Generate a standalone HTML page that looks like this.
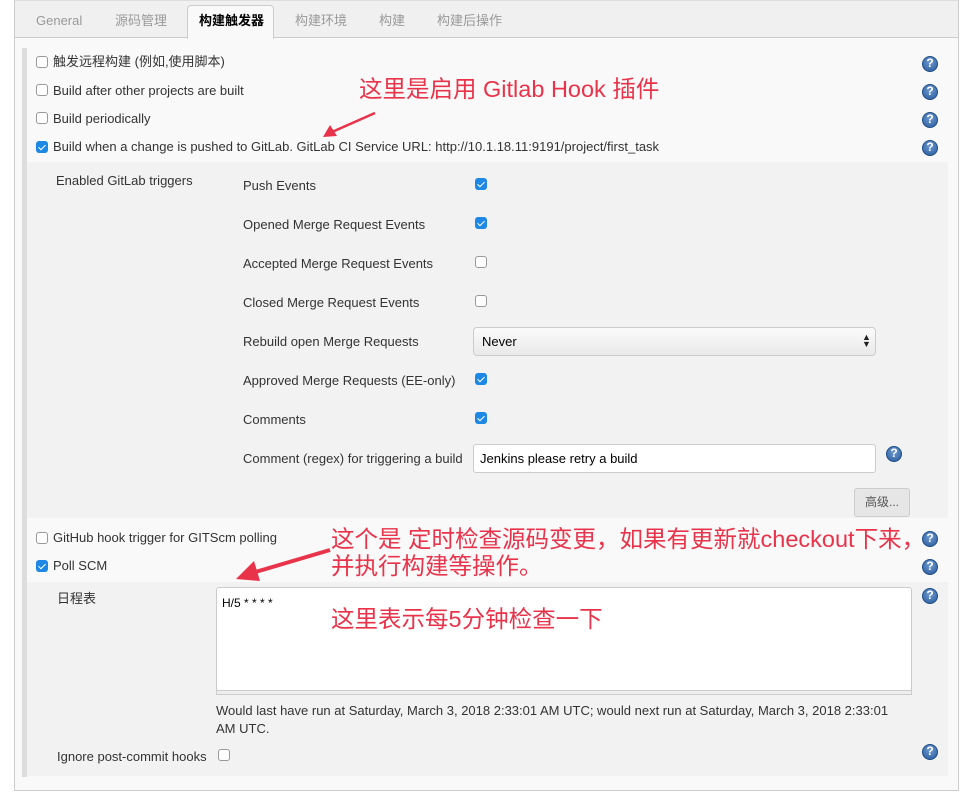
<!DOCTYPE html>
<html><head><meta charset="utf-8"><style>
*{margin:0;padding:0;box-sizing:border-box}
body{width:969px;height:792px;background:#fff;font-family:"Liberation Sans","Noto Sans CJK SC",sans-serif;font-size:13px;color:#333;position:relative;overflow:hidden}
.a{position:absolute;white-space:nowrap;line-height:16px}
.cb{position:absolute;width:12px;height:12px;border:1px solid #999;border-radius:3px;background:#fff}
.cc{position:absolute;width:12px;height:12px;border-radius:3px;background:#1e88e5}
.cc:after{content:"";position:absolute;left:4px;top:1.5px;width:3px;height:6px;border:solid #fff;border-width:0 1.6px 1.6px 0;transform:rotate(45deg)}
.h{position:absolute;width:16px;height:16px;border-radius:50%;background:radial-gradient(circle at 50% 35%,#6d9ad0,#2a5a9c);border:1.5px solid #1f4d87;color:#fff;font:bold 12px/13px "Liberation Sans",sans-serif;text-align:center}
.r{color:#e8334a;font-size:23.5px;line-height:27px;font-family:"Liberation Sans","Noto Sans CJK SC",sans-serif}
</style></head><body>
<div class="a" style="left:14px;top:0;width:945px;height:791px;border:1px solid #ccc;border-top:1px solid #ddd;background:#f9f9f9"></div>
<div class="a" style="left:15px;top:1px;width:943px;height:37px;background:#f0f0f0;border-bottom:1px solid #ccc"></div>
<div class="a" style="left:36px;top:13px;color:#999">General</div>
<div class="a" style="left:115px;top:13px;color:#999">源码管理</div>
<div class="a" style="left:187px;top:5px;width:87px;height:34px;background:#f9f9f9;border:1px solid #ccc;border-bottom:none;border-radius:4px 4px 0 0"></div>
<div class="a" style="left:199px;top:13px;color:#000;font-weight:bold">构建触发器</div>
<div class="a" style="left:295px;top:13px;color:#999">构建环境</div>
<div class="a" style="left:379px;top:13px;color:#999">构建</div>
<div class="a" style="left:437px;top:13px;color:#999">构建后操作</div>
<div class="a" style="left:22px;top:48px;width:5px;height:729px;background:#ddd"></div>

<div class="cb" style="left:36px;top:56px"></div><div class="a" style="left:53px;top:54px">触发远程构建 (例如,使用脚本)</div>
<div class="cb" style="left:36px;top:84px"></div><div class="a" style="left:53px;top:83px">Build after other projects are built</div>
<div class="cb" style="left:36px;top:112px"></div><div class="a" style="left:53px;top:111px">Build periodically</div>
<div class="cc" style="left:36px;top:141px"></div><div class="a" style="left:53px;top:139px">Build when a change is pushed to GitLab. GitLab CI Service URL: http://10.1.18.11:9191/project/first_task</div>
<div class="h" style="left:922px;top:56px">?</div><div class="h" style="left:922px;top:84px">?</div><div class="h" style="left:922px;top:112px">?</div><div class="h" style="left:922px;top:140px">?</div>

<div class="a" style="left:27px;top:162px;width:921px;height:356px;background:#f2f2f2"></div>
<div class="a" style="left:56px;top:173px">Enabled GitLab triggers</div>
<div class="a" style="left:243px;top:178px">Push Events</div><div class="cc" style="left:475px;top:178px"></div>
<div class="a" style="left:243px;top:217px">Opened Merge Request Events</div><div class="cc" style="left:475px;top:217px"></div>
<div class="a" style="left:243px;top:256px">Accepted Merge Request Events</div><div class="cb" style="left:475px;top:256px"></div>
<div class="a" style="left:243px;top:295px">Closed Merge Request Events</div><div class="cb" style="left:475px;top:295px"></div>
<div class="a" style="left:243px;top:334px">Rebuild open Merge Requests</div>
<div class="a" style="left:473px;top:327px;width:403px;height:29px;border:1px solid #ccc;border-radius:4px;background:linear-gradient(#fbfbfb,#e9e9e9)"></div>
<div class="a" style="left:482px;top:334px;color:#000">Never</div>
<div class="a" style="left:862px;top:334px;font-size:9px;line-height:7px;color:#222">▲<br>▼</div>
<div class="a" style="left:243px;top:373px">Approved Merge Requests (EE-only)</div><div class="cc" style="left:475px;top:373px"></div>
<div class="a" style="left:243px;top:412px">Comments</div><div class="cc" style="left:475px;top:412px"></div>
<div class="a" style="left:243px;top:451px">Comment (regex) for triggering a build</div>
<div class="a" style="left:473px;top:444px;width:403px;height:29px;border:1px solid #ccc;border-radius:3px;background:#fff"></div>
<div class="a" style="left:480px;top:451px;color:#000">Jenkins please retry a build</div>
<div class="h" style="left:886px;top:446px">?</div>
<div class="a" style="left:854px;top:488px;width:56px;height:29px;border:1px solid #ccc;border-radius:3px;background:#e6e6e6"></div>
<div class="a" style="left:865px;top:494px;font-size:12px;color:#555">高级...</div>

<div class="cb" style="left:36px;top:532px"></div><div class="a" style="left:53px;top:530px">GitHub hook trigger for GITScm polling</div>
<div class="cc" style="left:36px;top:560px"></div><div class="a" style="left:53px;top:558px">Poll SCM</div>
<div class="h" style="left:922px;top:531px">?</div><div class="h" style="left:922px;top:559px">?</div>

<div class="a" style="left:27px;top:582px;width:921px;height:194px;background:#f2f2f2"></div>
<div class="a" style="left:57px;top:591px">日程表</div>
<div class="a" style="left:216px;top:587px;width:696px;height:105px;border:1px solid #ccc;border-radius:3px;background:#fff"></div>
<div class="a" style="left:216px;top:690px;width:696px;height:5px;border:1px solid #ccc;background:#eee"></div>
<div class="a" style="left:222px;top:595px;font-size:12px;color:#000">H/5 * * * *</div>
<div class="h" style="left:922px;top:588px">?</div>
<div class="a" style="left:216px;top:702px;line-height:18px">Would last have run at Saturday, March 3, 2018 2:33:01 AM UTC; would next run at Saturday, March 3, 2018 2:33:01<br>AM UTC.</div>
<div class="a" style="left:57px;top:749px">Ignore post-commit hooks</div><div class="cb" style="left:218px;top:749px"></div>
<div class="h" style="left:922px;top:744px">?</div>

<div class="a r" style="left:359px;top:76px">这里是启用 Gitlab Hook 插件</div>
<svg class="a" style="left:320px;top:110px" width="60" height="30"><line x1="55" y1="3" x2="12" y2="22" stroke="#e8334a" stroke-width="2.5"/><polygon points="3,27 10,15 17,26" fill="#e8334a"/></svg>
<div class="a r" style="left:331px;top:526px">这个是 定时检查源码变更，如果有更新就checkout下来，<br>并执行构建等操作。</div>
<svg class="a" style="left:232px;top:543px" width="100" height="45"><line x1="98" y1="7" x2="20" y2="30" stroke="#e8334a" stroke-width="4"/><polygon points="4,36 22,18 28,38" fill="#e8334a"/></svg>
<div class="a r" style="left:331px;top:606px">这里表示每5分钟检查一下</div>
</body></html>
